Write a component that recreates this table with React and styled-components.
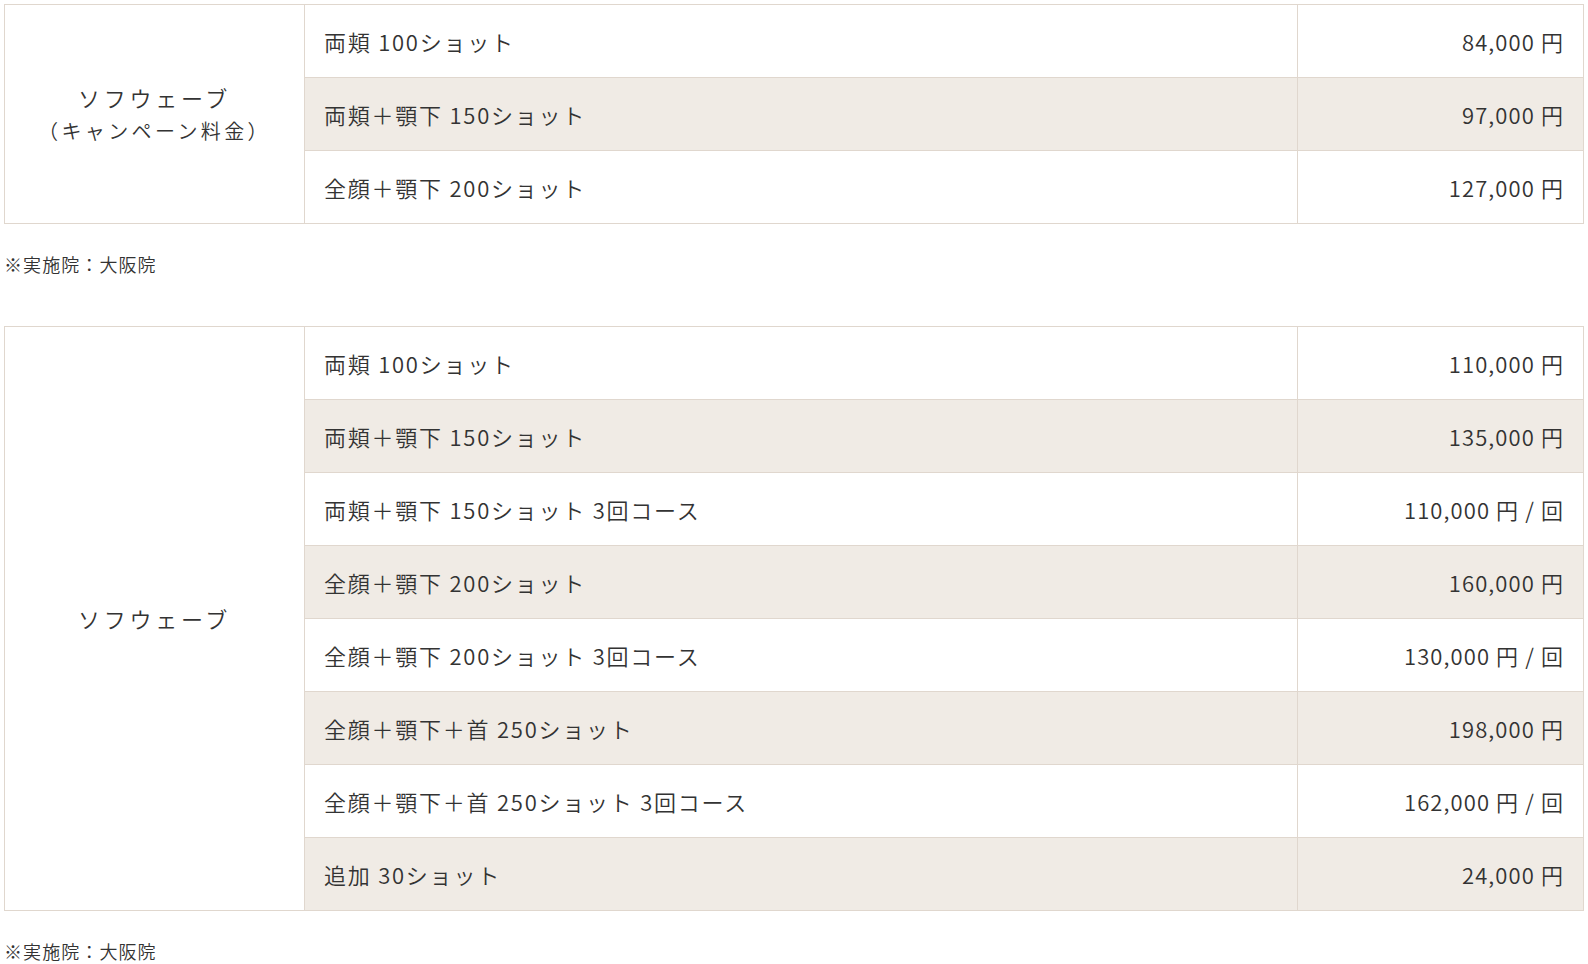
import React from "react";
import styled, { createGlobalStyle } from "styled-components";

const Global = createGlobalStyle`
  html, body { margin: 0; padding: 0; background: #fff; }
  body {
    font-family: "Noto Sans CJK JP", "Noto Sans", sans-serif;
    font-weight: 350;
    color: #333;
  }
`;

const Page = styled.div`
  padding: 4px 0 0 4px;
  width: 1580px;
`;

const Section = styled.section`
  display: flex;
  flex-direction: column;
  & + & { margin-top: 50px; }
`;

const Table = styled.table`
  width: 100%;
  border-collapse: collapse;
  table-layout: fixed;
  font-size: 22px;
  letter-spacing: 0.08em;
`;

const Row = styled.tr`
  height: 73px;
`;

const NameCell = styled.td`
  box-sizing: border-box;
  width: 300px;
  border: 1px solid #e0d7ce;
  background: #fff;
  text-align: center;
  vertical-align: middle;
  line-height: 33px;
  letter-spacing: 0.17em;
`;

const Sub = styled.span`
  display: block;
  font-size: 20px;
  letter-spacing: 0.17em;
`;

const ItemCell = styled.td`
  border: 1px solid #e0d7ce;
  background: ${(p) => (p.$shade ? "#f0ebe5" : "#fff")};
  padding: 0 19px;
  vertical-align: middle;
  white-space: nowrap;
`;

const PriceCell = styled.td`
  box-sizing: border-box;
  width: 286px;
  border: 1px solid #e0d7ce;
  background: ${(p) => (p.$shade ? "#f0ebe5" : "#fff")};
  padding: 0 19px;
  text-align: right;
  vertical-align: middle;
  letter-spacing: 0.05em;
  white-space: nowrap;
`;

const Note = styled.p`
  margin: 0;
  padding: 28px 0 0 0;
  font-size: 18px;
  letter-spacing: 0.06em;
  line-height: 24px;
`;

const campaign = [
  ["両頬 100ショット", "84,000 円"],
  ["両頬＋顎下 150ショット", "97,000 円"],
  ["全顔＋顎下 200ショット", "127,000 円"],
];

const regular = [
  ["両頬 100ショット", "110,000 円"],
  ["両頬＋顎下 150ショット", "135,000 円"],
  ["両頬＋顎下 150ショット 3回コース", "110,000 円 / 回"],
  ["全顔＋顎下 200ショット", "160,000 円"],
  ["全顔＋顎下 200ショット 3回コース", "130,000 円 / 回"],
  ["全顔＋顎下＋首 250ショット", "198,000 円"],
  ["全顔＋顎下＋首 250ショット 3回コース", "162,000 円 / 回"],
  ["追加 30ショット", "24,000 円"],
];

function PriceTable({ name, sub, rows }) {
  return (
    <Table>
      <tbody>
        {rows.map(([item, price], i) => (
          <Row key={i}>
            {i === 0 && (
              <NameCell rowSpan={rows.length}>
                {name}
                {sub && <Sub>{sub}</Sub>}
              </NameCell>
            )}
            <ItemCell $shade={i % 2 === 1}>{item}</ItemCell>
            <PriceCell $shade={i % 2 === 1}>{price}</PriceCell>
          </Row>
        ))}
      </tbody>
    </Table>
  );
}

export default function App() {
  return (
    <>
      <Global />
      <Page>
        <Section>
          <PriceTable name="ソフウェーブ" sub="（キャンペーン料金）" rows={campaign} />
          <Note>※実施院：大阪院</Note>
        </Section>
        <Section>
          <PriceTable name="ソフウェーブ" rows={regular} />
          <Note>※実施院：大阪院</Note>
        </Section>
      </Page>
    </>
  );
}
